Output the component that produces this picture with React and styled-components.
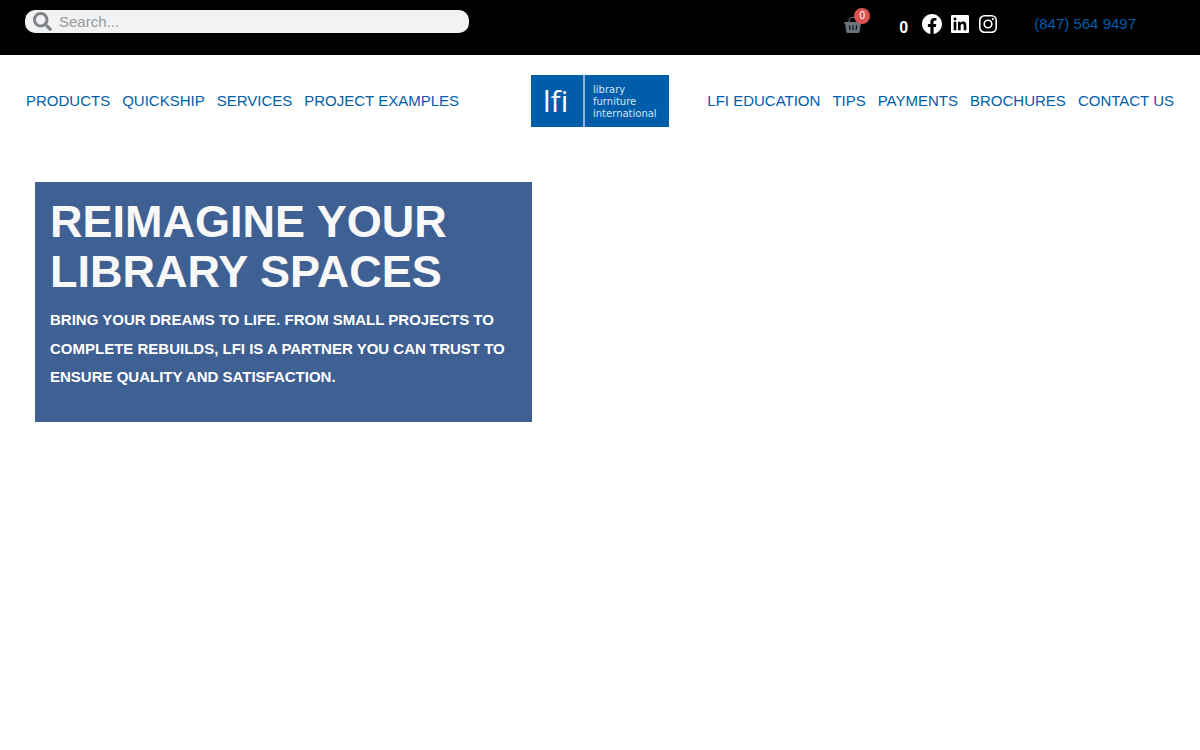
import React from "react";
import styled, { createGlobalStyle } from "styled-components";
import { FaSearch } from "react-icons/fa";

const blue = "#005daa";

const GlobalStyle = createGlobalStyle`
  *, *::before, *::after { box-sizing: border-box; }
  body {
    margin: 0;
    background: #fff;
    color: ${blue};
    font-family: "Liberation Sans", Arial, sans-serif;
    font-size: 15px;
  }
  a { color: inherit; text-decoration: none; }
`;

const TopBar = styled.header`
  display: flex;
  justify-content: space-between;
  align-items: flex-start;
  min-height: 55px;
  padding: 10px 64px 0 25px;
  background: #000;
`;

const SearchForm = styled.form`
  display: flex;
  align-items: center;
  gap: 7px;
  width: 40%;
  height: 23px;
  padding: 0 8px;
  border-radius: 10px;
  background: #f1f2f3;
  color: #818a91;
`;

const SearchButton = styled.button`
  display: flex;
  padding: 0;
  border: 0;
  background: none;
  color: #808386;
  cursor: pointer;
`;

const SearchInput = styled.input`
  flex: 1;
  min-width: 0;
  padding: 0;
  border: 0;
  outline: 0;
  background: none;
  color: #333;
  font: inherit;
  line-height: 23px;
  &::placeholder { color: #999; opacity: 1; }
`;

const Tools = styled.div`
  display: flex;
  align-items: center;
  height: 28px;
  color: #fff;
`;

const CartLink = styled.a`
  position: relative;
  display: flex;
  margin-right: 37px;
  padding-top: 2px;
  color: #69727d;
`;

const Badge = styled.span`
  position: absolute;
  top: -6px;
  right: -8px;
  width: 16px;
  border-radius: 50%;
  background: #d9534f;
  color: #fff;
  font-size: 10px;
  line-height: 16px;
  text-align: center;
`;

const Count = styled.strong`
  padding-top: 8px;
  margin-right: 12px;
  font-size: 16px;
  line-height: 22px;
`;

const SocialList = styled.nav`
  display: flex;
  gap: 4px;
  margin-right: 34px;
`;

const IconLink = styled.a`
  display: flex;
`;

const Phone = styled.a`
  padding-bottom: 2px;
  color: ${blue};
`;

const MainNav = styled.div`
  display: grid;
  grid-template-columns: 1fr auto 1fr;
  align-items: center;
  padding: 20px 26px;
`;

const Menu = styled.nav`
  display: flex;
  justify-content: ${(p) => (p.$end ? "flex-end" : "flex-start")};
  gap: 12px;
  line-height: 20px;
  white-space: nowrap;
`;

const Logo = styled.a`
  display: flex;
  align-items: center;
  width: 138px;
  height: 52px;
  background: ${blue};
  color: #fff;
`;

const LogoMark = styled.span`
  width: 54px;
  padding-left: 12px;
  border-right: 2px solid #8fb4dc;
  font-family: "Open Sans", sans-serif;
  font-variant-ligatures: none;
  font-size: 30px;
  font-weight: 400;
  line-height: 52px;
`;

const LogoName = styled.span`
  padding: 2px 0 0 8px;
  color: #d5e3f2;
  font-family: "DejaVu Sans", sans-serif;
  font-size: 10px;
  font-weight: 400;
  line-height: 12px;
`;

const Hero = styled.section`
  width: 44%;
  min-height: 240px;
  padding: 15px 15px 30px;
  background: #3f6092;
  color: #fff;
`;

const Main = styled.main`
  padding: 35px;
`;

const HeroTitle = styled.h1`
  margin: 0 0 9px;
  color: #f8f8f8;
  font-size: 45px;
  line-height: 50px;
`;

const HeroText = styled.p`
  margin: 0;
  font-weight: 700;
  line-height: 1.9;
`;

const BasketIcon = () => (
  <svg width="18" height="18" viewBox="0 0 18 18" aria-hidden="true">
    <path d="M4 8 5.5 3Q6 1.5 7.5 1.5H10.5Q12 1.5 12.5 3L14 8" fill="none" stroke="currentColor" strokeWidth="1" />
    <path fill="currentColor" fillRule="evenodd" d="M0 6H18V7.5H17L15.6 16Q15.4 17 14.4 17H3.6Q2.6 17 2.4 16L1 7.5H0ZM5 9.5 5.4 14H6.4L6 9.5ZM8.5 9.5V14H9.5V9.5ZM12 9.5 11.6 14H12.6L13 9.5Z" />
  </svg>
);

const FacebookIcon = () => (
  <svg width="24" height="24" viewBox="0 0 24 24" fill="currentColor" aria-hidden="true">
    <path d="M12 2C6.5 2 2 6.5 2 12c0 5 3.7 9.1 8.4 9.9v-7H7.9V12h2.5V9.8c0-2.5 1.5-3.9 3.8-3.9 1.1 0 2.2.2 2.2.2v2.5h-1.3c-1.2 0-1.6.8-1.6 1.6V12h2.8l-.4 2.9h-2.3v7C18.3 21.1 22 17 22 12c0-5.5-4.5-10-10-10z" />
  </svg>
);

const LinkedInIcon = () => (
  <svg width="24" height="24" viewBox="0 0 24 24" fill="currentColor" aria-hidden="true">
    <path d="M19.7,3H4.3C3.582,3,3,3.582,3,4.3v15.4C3,20.418,3.582,21,4.3,21h15.4c0.718,0,1.3-0.582,1.3-1.3V4.3C21,3.582,20.418,3,19.7,3z M8.339,18.338H5.667v-8.59h2.672V18.338z M7.004,8.574c-0.857,0-1.549-0.694-1.549-1.548c0-0.855,0.691-1.548,1.549-1.548c0.854,0,1.547,0.694,1.547,1.548C8.551,7.881,7.858,8.574,7.004,8.574z M18.339,18.338h-2.669v-4.177c0-0.996-0.017-2.278-1.387-2.278c-1.389,0-1.601,1.086-1.601,2.206v4.249h-2.667v-8.59h2.559v1.174h0.037c0.356-0.675,1.227-1.387,2.526-1.387c2.703,0,3.203,1.779,3.203,4.092V18.338z" />
  </svg>
);

const InstagramIcon = () => (
  <svg width="24" height="24" viewBox="0 0 24 24" fill="none" stroke="currentColor" strokeWidth="1.62" aria-hidden="true">
    <rect x="3.81" y="3.81" width="16.38" height="16.38" rx="4.4" />
    <circle cx="12" cy="12" r="3.81" />
    <circle cx="16.8" cy="7.2" r="1.08" fill="currentColor" stroke="none" />
  </svg>
);

const socials = [
  ["Facebook", FacebookIcon],
  ["LinkedIn", LinkedInIcon],
  ["Instagram", InstagramIcon],
];
const leftLinks = ["PRODUCTS", "QUICKSHIP", "SERVICES", "PROJECT EXAMPLES"];
const rightLinks = ["LFI EDUCATION", "TIPS", "PAYMENTS", "BROCHURES", "CONTACT US"];

export default function App() {
  return (
    <>
      <GlobalStyle />
      <TopBar>
        <SearchForm role="search" onSubmit={(e) => e.preventDefault()}>
          <SearchButton type="submit" aria-label="Search">
            <FaSearch size={19} />
          </SearchButton>
          <SearchInput type="search" aria-label="Search" placeholder="Search..." />
        </SearchForm>
        <Tools>
          <CartLink href="#cart" aria-label="Cart">
            <BasketIcon />
            <Badge>0</Badge>
          </CartLink>
          <Count>0</Count>
          <SocialList aria-label="Social">
            {socials.map(([name, Icon]) => (
              <IconLink key={name} href={`#${name}`} aria-label={name}>
                <Icon />
              </IconLink>
            ))}
          </SocialList>
          <Phone href="tel:8475649497">(847) 564 9497</Phone>
        </Tools>
      </TopBar>
      <MainNav>
        <Menu aria-label="Shop">
          {leftLinks.map((t) => <a key={t} href="#menu">{t}</a>)}
        </Menu>
        <Logo href="#home">
          <LogoMark>lfi</LogoMark>
          <LogoName>library<br />furniture<br />international</LogoName>
        </Logo>
        <Menu $end aria-label="Company">
          {rightLinks.map((t) => <a key={t} href="#menu">{t}</a>)}
        </Menu>
      </MainNav>
      <Main>
        <Hero>
          <HeroTitle>REIMAGINE YOUR LIBRARY SPACES</HeroTitle>
          <HeroText>
            BRING YOUR DREAMS TO LIFE. FROM SMALL PROJECTS TO COMPLETE REBUILDS, LFI IS A PARTNER YOU CAN TRUST TO ENSURE QUALITY AND SATISFACTION.
          </HeroText>
        </Hero>
      </Main>
    </>
  );
}
